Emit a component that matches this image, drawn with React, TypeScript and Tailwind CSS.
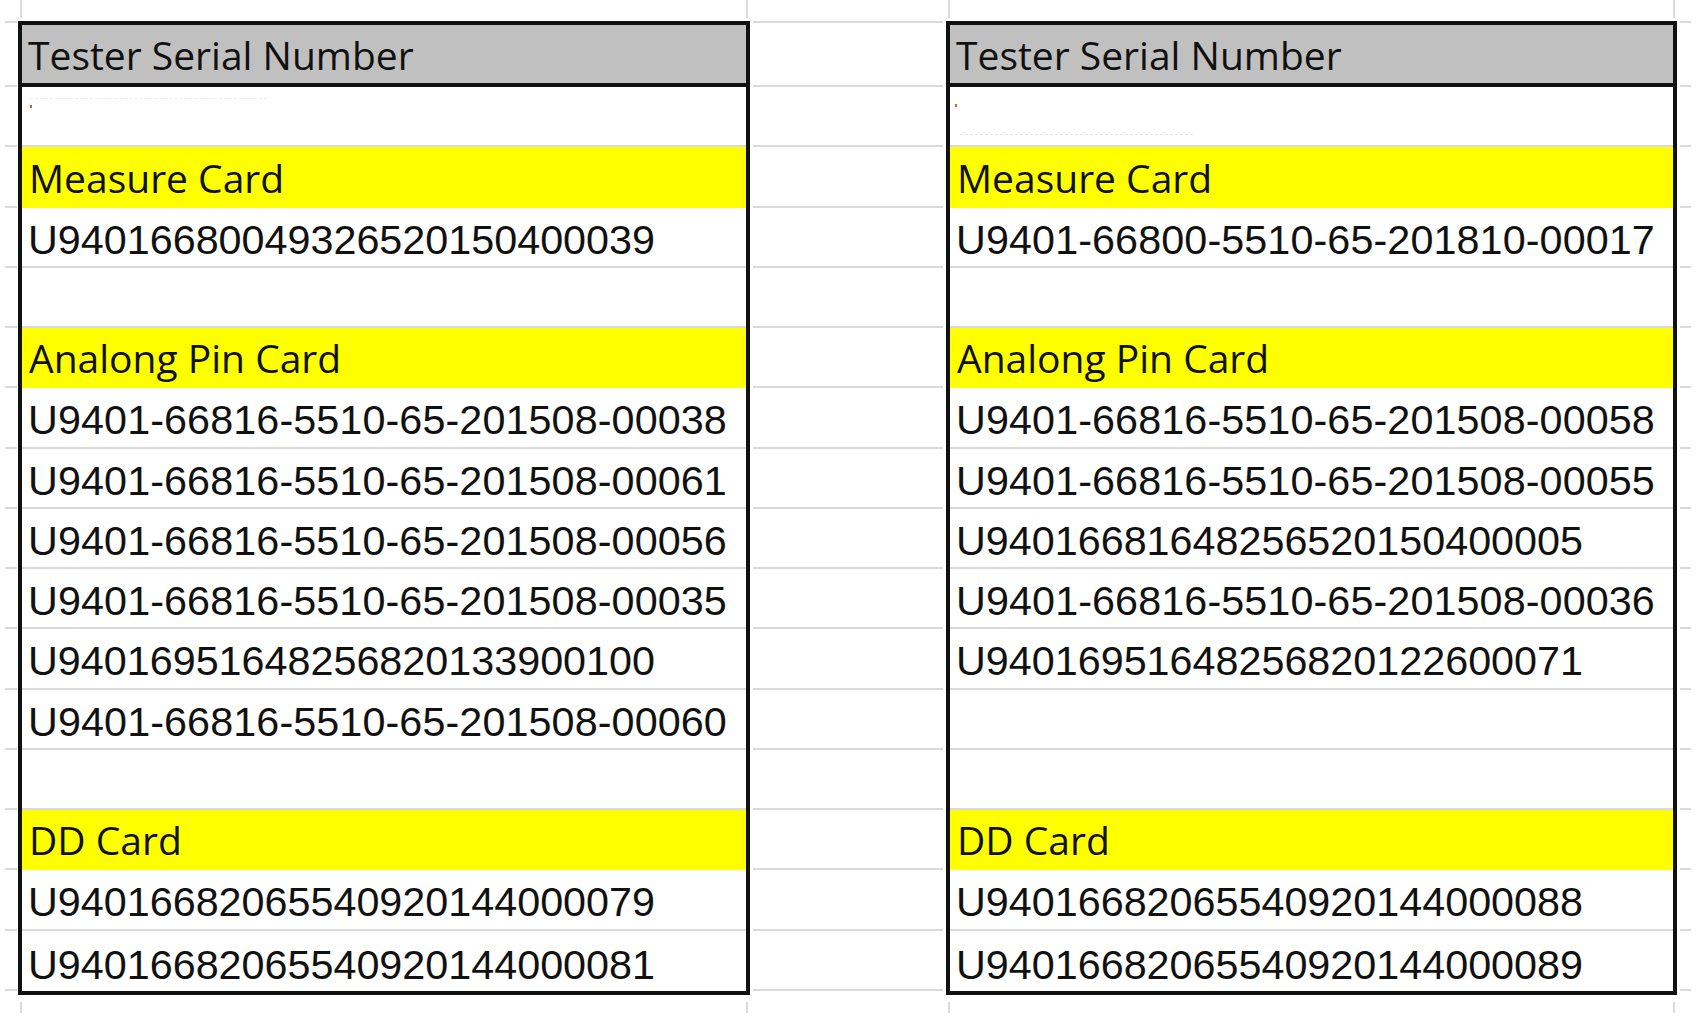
import React from 'react';

type Row = { kind: 'blank' | 'label' | 'serial' | 'marks'; text?: string };

const LINE = 'border-[#dadada]';
const ROW = 'h-[60.27px]';

const leftRows: Row[] = [
  { kind: 'marks' },
  { kind: 'label', text: 'Measure Card' },
  { kind: 'serial', text: 'U94016680049326520150400039' },
  { kind: 'blank' },
  { kind: 'label', text: 'Analong Pin Card' },
  { kind: 'serial', text: 'U9401-66816-5510-65-201508-00038' },
  { kind: 'serial', text: 'U9401-66816-5510-65-201508-00061' },
  { kind: 'serial', text: 'U9401-66816-5510-65-201508-00056' },
  { kind: 'serial', text: 'U9401-66816-5510-65-201508-00035' },
  { kind: 'serial', text: 'U94016951648256820133900100' },
  { kind: 'serial', text: 'U9401-66816-5510-65-201508-00060' },
  { kind: 'blank' },
  { kind: 'label', text: 'DD Card' },
  { kind: 'serial', text: 'U94016682065540920144000079' },
  { kind: 'serial', text: 'U94016682065540920144000081' },
];

const rightRows: Row[] = [
  { kind: 'marks' },
  { kind: 'label', text: 'Measure Card' },
  { kind: 'serial', text: 'U9401-66800-5510-65-201810-00017' },
  { kind: 'blank' },
  { kind: 'label', text: 'Analong Pin Card' },
  { kind: 'serial', text: 'U9401-66816-5510-65-201508-00058' },
  { kind: 'serial', text: 'U9401-66816-5510-65-201508-00055' },
  { kind: 'serial', text: 'U94016681648256520150400005' },
  { kind: 'serial', text: 'U9401-66816-5510-65-201508-00036' },
  { kind: 'serial', text: 'U94016951648256820122600071' },
  { kind: 'blank' },
  { kind: 'blank' },
  { kind: 'label', text: 'DD Card' },
  { kind: 'serial', text: 'U94016682065540920144000088' },
  { kind: 'serial', text: 'U94016682065540920144000089' },
];

// faint leftovers of hidden text in the first blank row
function Marks({ side }: { side: 'left' | 'right' }) {
  if (side === 'left') {
    return (
      <div className="flex flex-col pl-[8px] pt-[11px]">
        <div className="w-[237px] border-t border-dashed border-[#ececec]" />
        <div className="mt-[6px] h-[3px] w-[2px] bg-[#c8663a]" />
      </div>
    );
  }
  return (
    <div className="flex flex-col pl-[5px] pt-[17px]">
      <div className="h-[3px] w-[2px] bg-[#c8663a]" />
      <div className="ml-[5px] mt-[27px] w-[233px] border-t border-dashed border-[#e4e4e4]" />
    </div>
  );
}

function Cell({ row, last, side }: { row: Row; last: boolean; side: 'left' | 'right' }) {
  const edge = last ? '' : row.kind === 'label' ? 'border-b-2 border-[#ffff00]' : `border-b-2 ${LINE}`;
  if (row.kind === 'marks') {
    return (
      <div className={`${ROW} ${edge}`}>
        <Marks side={side} />
      </div>
    );
  }
  if (row.kind === 'blank') return <div className={`${ROW} ${edge}`} />;
  if (row.kind === 'label') {
    return (
      <div className={`${ROW} ${edge} flex items-end bg-[#ffff00] pb-[9px] pl-[7px]`}>
        <span className="font-['Open_Sans',sans-serif] text-[39px] leading-none text-[#111]">{row.text}</span>
      </div>
    );
  }
  // dashed serials render a touch wider in the original
  const spacing = row.text?.includes('-') ? 'tracking-[0.1px]' : '';
  return (
    <div className={`${ROW} ${edge} flex items-end pb-[5px] pl-[6px]`}>
      <span className={`font-['Liberation_Sans',Arial,sans-serif] text-[41.3px] leading-none text-[#111] ${spacing}`}>
        {row.text}
      </span>
    </div>
  );
}

function Sheet({ rows, side, width }: { rows: Row[]; side: 'left' | 'right'; width: string }) {
  return (
    <div className={`flex shrink-0 flex-col ${width}`}>
      <div className="h-[21px] pb-[3px]">
        <div className={`mx-[2px] h-full border-x-2 ${LINE}`} />
      </div>
      <div className="border-4 border-[#111]">
        <div className="flex h-[62px] items-end border-b-4 border-[#111] bg-[#c0c0c0] pb-[9px] pl-[6px]">
          <span className="font-['Open_Sans',sans-serif] text-[39px] leading-none text-[#111]">Tester Serial Number</span>
        </div>
        {rows.map((r, i) => (
          <Cell key={i} row={r} side={side} last={i === rows.length - 1} />
        ))}
      </div>
      <div className="h-[18px] pt-[7px]">
        <div className={`mx-[2px] h-full border-x-2 ${LINE}`} />
      </div>
    </div>
  );
}

// plain spreadsheet cells around the two tables
function GridColumn({ width, inset }: { width: string; inset: string }) {
  const body = Array.from({ length: 15 });
  return (
    <div className={`flex shrink-0 flex-col ${width}`}>
      <div className={`h-[23px] ${inset}`}>
        <div className={`h-full border-b-2 ${LINE}`} />
      </div>
      <div className={`h-[64px] ${inset}`}>
        <div className={`h-full border-b-2 ${LINE}`} />
      </div>
      {body.map((_, i) => (
        <div key={i} className={`${ROW} ${inset}`}>
          <div className={`h-full border-b-2 ${LINE}`} />
        </div>
      ))}
    </div>
  );
}

export default function App() {
  return (
    <div className="flex h-[1020px] w-[1700px] overflow-hidden bg-white">
      <GridColumn width="w-[18px]" inset="pl-[5px] pr-[1px]" />
      <Sheet rows={leftRows} side="left" width="w-[732px]" />
      <GridColumn width="w-[196px]" inset="px-[3px]" />
      <Sheet rows={rightRows} side="right" width="w-[731px]" />
      <GridColumn width="w-[23px]" inset="pl-[3px] pr-[9px]" />
    </div>
  );
}
